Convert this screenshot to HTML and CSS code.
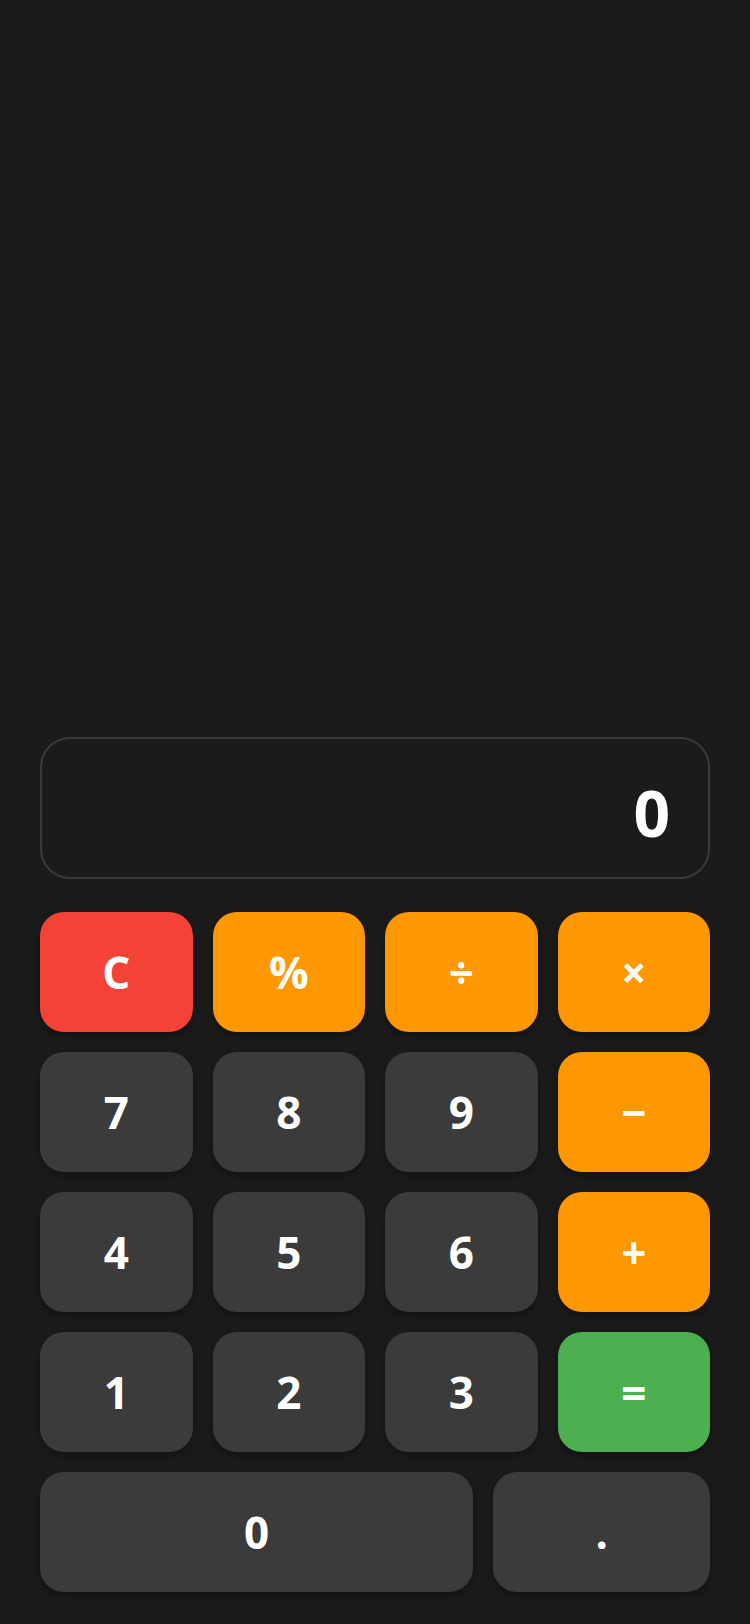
FILE: index.html
```html
<!DOCTYPE html>
<html lang="en">
<head>
    <meta charset="UTF-8">
    <meta name="viewport" content="width=device-width, initial-scale=1.0">
    <title>Kalkulator</title>
    <link rel="stylesheet" href="styles.css">
</head>
<body>
    <div class="calculator">
        <!-- Layar hasil -->
        <div class="display" id="display">0</div>

        <!-- Tombol angka dan operator -->
        <div class="keys">
            <button class="key clear" onclick="hapus()">C</button>
            <button class="key operator" onclick="tekan('%')">%</button>
            <button class="key operator" onclick="tekan('/')">÷</button>
            <button class="key operator" onclick="tekan('*')">×</button>

            <button class="key" onclick="tekan('7')">7</button>
            <button class="key" onclick="tekan('8')">8</button>
            <button class="key" onclick="tekan('9')">9</button>
            <button class="key operator" onclick="tekan('-')">−</button>

            <button class="key" onclick="tekan('4')">4</button>
            <button class="key" onclick="tekan('5')">5</button>
            <button class="key" onclick="tekan('6')">6</button>
            <button class="key operator" onclick="tekan('+')">+</button>

            <button class="key" onclick="tekan('1')">1</button>
            <button class="key" onclick="tekan('2')">2</button>
            <button class="key" onclick="tekan('3')">3</button>
            <button class="key equals" onclick="hitung()">=</button>
        </div>
        <div class="keys-bottom">
            <button class="key" onclick="tekan('0')">0</button>
            <button class="key" onclick="tekan('.')">.</button>
        </div>
    </div>

    <script>
        let ekspresi = "";
        const layar = document.getElementById('display');

        function tampil() {
            layar.textContent = ekspresi === "" ? "0" : ekspresi
                .replace(/\*/g, "×").replace(/\//g, "÷").replace(/-/g, "−");
        }

        function tekan(nilai) {
            ekspresi += nilai;
            tampil();
        }

        function hapus() {
            ekspresi = "";
            tampil();
        }

        function hitung() {
            try {
                const hasil = Function("return " + ekspresi.replace(/%/g, "/100"))();
                ekspresi = String(hasil);
            } catch (e) {
                ekspresi = "";
                layar.textContent = "Error";
                return;
            }
            tampil();
        }
    </script>
</body>
</html>
```

FILE: styles.css
```css
body {
    margin: 0;
    background-color: #1b1b1b;
    font-family: "Open Sans", Arial, sans-serif;
}
.calculator {
    min-height: 100vh;
    box-sizing: border-box;
    display: flex;
    flex-direction: column;
    justify-content: flex-end;
    padding: 0 40px 32px;
}
/* Layar hasil */
.display {
    border: 2px solid #3a3a3a;
    border-radius: 30px;
    padding: 33px 38px 23px;
    margin-bottom: 33px;
    color: white;
    font-size: 64px;
    font-weight: 700;
    line-height: 82px;
    text-align: right;
    overflow: hidden;
}
/* Grid tombol 4 kolom */
.keys {
    display: grid;
    grid-template-columns: repeat(4, 1fr);
    grid-auto-rows: 120px;
    gap: 20px;
}
.keys-bottom {
    display: grid;
    grid-template-columns: 2fr 1fr;
    grid-auto-rows: 120px;
    gap: 20px;
    margin-top: 20px;
}
.key {
    background-color: #3b3b3b;
    color: white;
    border: none;
    border-radius: 24px;
    font-family: inherit;
    font-size: 44px;
    font-weight: 700;
    cursor: pointer;
    box-shadow: 0 4px 10px rgba(0, 0, 0, 0.3);
}
.key:active {
    filter: brightness(1.2);
}
.operator {
    background-color: #ff9800;
}
.clear {
    background-color: #f44336;
}
.equals {
    background-color: #4caf50;
}
```
